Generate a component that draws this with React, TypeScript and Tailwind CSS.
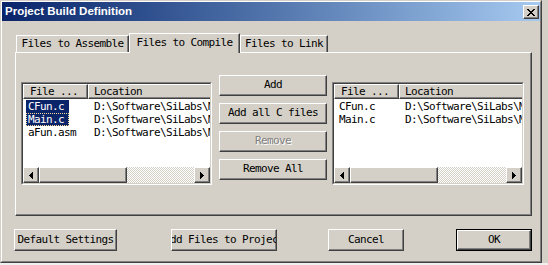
import React from "react";

// classic 3D bevel used by buttons, tabs, headers, scroll parts
const raised =
  "bg-[#d4d0c8] border border-t-white border-l-white border-r-[#404040] border-b-[#404040] shadow-[inset_-1px_-1px_#808080]";

type Row = { file: string; loc: string };

const LEFT_ROWS: Row[] = [
  { file: "CFun.c", loc: "D:\\Software\\SiLabs\\MCU\\Examples" },
  { file: "Main.c", loc: "D:\\Software\\SiLabs\\MCU\\Examples" },
  { file: "aFun.asm", loc: "D:\\Software\\SiLabs\\MCU\\Examples" },
];

const RIGHT_ROWS: Row[] = [
  { file: "CFun.c", loc: "D:\\Software\\SiLabs\\MCU\\Examples" },
  { file: "Main.c", loc: "D:\\Software\\SiLabs\\MCU\\Examples" },
];

function Arrow({ dir }: { dir: "left" | "right" }) {
  return (
    <div className={`${raised} w-[16px] h-[16px] shrink-0 flex items-center justify-center`}>
      <svg width="4" height="7" viewBox="0 0 4 7" shapeRendering="crispEdges">
        {dir === "left" ? (
          <g fill="#000">
            <rect x="3" y="0" width="1" height="7" />
            <rect x="2" y="1" width="1" height="5" />
            <rect x="1" y="2" width="1" height="3" />
            <rect x="0" y="3" width="1" height="1" />
          </g>
        ) : (
          <g fill="#000">
            <rect x="0" y="0" width="1" height="7" />
            <rect x="1" y="1" width="1" height="5" />
            <rect x="2" y="2" width="1" height="3" />
            <rect x="3" y="3" width="1" height="1" />
          </g>
        )}
      </svg>
    </div>
  );
}

function ListView({
  className,
  rows,
  selected,
  focused,
}: {
  className: string;
  rows: Row[];
  selected: number[];
  focused: number;
}) {
  return (
    <div
      className={`h-[103px] border border-t-[#808080] border-l-[#808080] border-r-white border-b-white ${className}`}
    >
      <div className="h-full flex flex-col bg-white border border-t-[#404040] border-l-[#404040] border-r-[#d4d0c8] border-b-[#d4d0c8]">
        <div className="flex h-[15px] shrink-0 overflow-hidden">
          <div className={`${raised} w-[65px] shrink-0 pl-[6px] leading-[13px]`}>File ...</div>
          <div className={`${raised} w-[240px] shrink-0 pl-[5px] leading-[13px]`}>Location</div>
        </div>
        <div className="flex-1 overflow-hidden pt-[1px]">
          {rows.map((r, i) => {
            const sel = selected.includes(i);
            return (
              <div key={i} className="flex h-[13px] leading-[13px] whitespace-nowrap">
                <div className="w-[65px] shrink-0 pl-[3px]">
                  <span
                    className={
                      sel
                        ? `inline-block h-[13px] pl-[2px] pr-[5px] bg-[#0a246a] text-white ${
                            i === focused ? "outline-1 outline-dotted outline-[#f5db95] -outline-offset-1" : ""
                          }`
                        : "inline-block h-[13px] pl-[2px]"
                    }
                  >
                    {r.file}
                  </span>
                </div>
                <div className="pl-[6px]">{r.loc}</div>
              </div>
            );
          })}
        </div>
        <div className="flex h-[16px] shrink-0">
          <Arrow dir="left" />
          <div className={`${raised} w-[88px] shrink-0`} />
          <div className="flex-1 [background-image:repeating-conic-gradient(#ffffff_0%_25%,#d4d0c8_0%_50%)] [background-size:2px_2px]" />
          <Arrow dir="right" />
        </div>
      </div>
    </div>
  );
}

function Btn({ children, className, disabled }: { children: React.ReactNode; className: string; disabled?: boolean }) {
  return (
    <div
      className={`${raised} flex items-center justify-center overflow-hidden whitespace-nowrap ${
        disabled ? "text-[#808080] [text-shadow:1px_1px_0_#ffffff]" : ""
      } ${className}`}
    >
      {children}
    </div>
  );
}

export default function App() {
  return (
    <div className="w-[548px] h-[265px] overflow-hidden bg-[#d4d0c8] text-black font-['DejaVu_Sans_Mono','Liberation_Mono',monospace] text-[11px] tracking-[-0.62px]">
      <div className="w-[542px] h-[263px] border border-t-[#d4d0c8] border-l-[#d4d0c8] border-r-[#404040] border-b-[#404040]">
        <div className="h-full flex flex-col border border-t-white border-l-white border-r-[#808080] border-b-[#808080]">
          {/* title bar */}
          <div className="h-[19px] shrink-0 flex bg-linear-to-r from-[#0a246a] to-[#a6caf0]">
            <span className="pl-[3px] leading-[19px] text-white font-bold text-[11.5px] tracking-normal font-['Liberation_Sans',Arial,sans-serif]">
              Project Build Definition
            </span>
            <div className={`${raised} ml-auto mr-[1px] mt-[3px] w-[16px] h-[14px] flex items-center justify-center`}>
              <svg width="8" height="7" viewBox="0 0 8 7" shapeRendering="crispEdges">
                <g fill="#000">
                  <rect x="0" y="0" width="2" height="1" />
                  <rect x="6" y="0" width="2" height="1" />
                  <rect x="1" y="1" width="2" height="1" />
                  <rect x="5" y="1" width="2" height="1" />
                  <rect x="2" y="2" width="4" height="1" />
                  <rect x="3" y="3" width="2" height="1" />
                  <rect x="2" y="4" width="4" height="1" />
                  <rect x="1" y="5" width="2" height="1" />
                  <rect x="5" y="5" width="2" height="1" />
                  <rect x="0" y="6" width="2" height="1" />
                  <rect x="6" y="6" width="2" height="1" />
                </g>
              </svg>
            </div>
          </div>

          {/* tabs */}
          <div className="mt-[12px] ml-[14px] flex items-end h-[19px]">
            <div className="h-[17px] w-[113px] flex items-center justify-center bg-[#d4d0c8] border-t border-l border-r border-t-white border-l-white border-r-[#404040] shadow-[inset_-1px_0_#808080]">
              Files to Assemble
            </div>
            <div className="relative z-10 -mb-px h-[20px] w-[111px] flex items-center justify-center pb-[1px] bg-[#d4d0c8] border-t border-l border-r border-t-white border-l-white border-r-[#404040] shadow-[inset_-1px_0_#808080]">
              Files to Compile
            </div>
            <div className="h-[17px] w-[88px] flex items-center justify-center bg-[#d4d0c8] border-t border-l border-r border-t-white border-l-white border-r-[#404040] shadow-[inset_-1px_0_#808080]">
              Files to Link
            </div>
          </div>

          {/* tab panel */}
          <div className="ml-[13px] w-[517px] h-[164px] shrink-0 flex items-start border border-t-white border-l-white border-r-[#404040] border-b-[#404040] shadow-[inset_-1px_-1px_#808080]">
            <ListView className="ml-[5px] mt-[29px] w-[191px]" rows={LEFT_ROWS} selected={[0, 1]} focused={1} />
            <div className="ml-[7px] mt-[22px] w-[108px] flex flex-col gap-[7px]">
              <Btn className="h-[21px]">Add</Btn>
              <Btn className="h-[21px]">Add all C files</Btn>
              <Btn className="h-[21px]" disabled>
                Remove
              </Btn>
              <Btn className="h-[21px]">Remove All</Btn>
            </div>
            <ListView className="ml-[5px] mt-[29px] w-[192px]" rows={RIGHT_ROWS} selected={[]} focused={-1} />
          </div>

          {/* dialog buttons */}
          <div className="mt-[13px] ml-[12px] flex h-[22px]">
            <Btn className="w-[103px]">Default Settings</Btn>
            <Btn className="ml-[54px] w-[106px]">Add Files to Project</Btn>
            <Btn className="ml-[51px] w-[76px]">Cancel</Btn>
            <div className="ml-[52px] w-[76px] border border-black">
              <Btn className="h-full">OK</Btn>
            </div>
          </div>
        </div>
      </div>
      <div className="h-[2px] bg-[#f0f0f0]" />
    </div>
  );
}
